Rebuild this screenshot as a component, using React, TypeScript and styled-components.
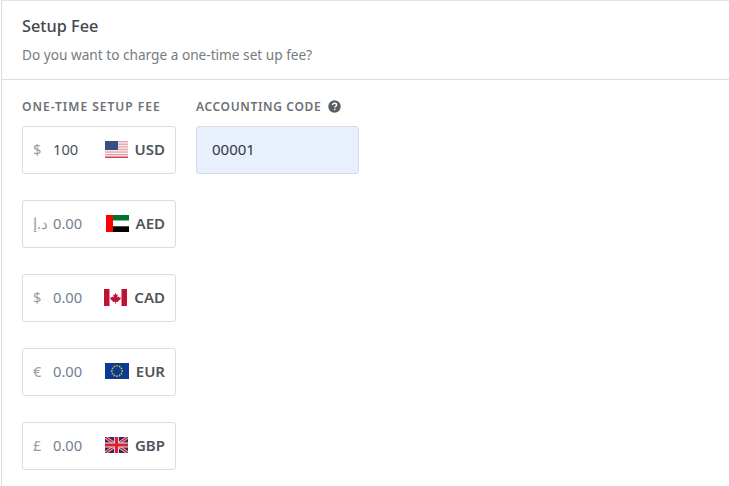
import { createGlobalStyle, styled } from "styled-components";

const GlobalStyle = createGlobalStyle`
  html, body {
    margin: 0;
    height: 100%;
    overflow: hidden;
    background: #fff;
    font-family: "Noto Sans", "Open Sans", sans-serif;
  }
`;

const Panel = styled.div`
  width: 728px;
  height: 486px;
  margin-left: 1px;
  border-left: 1px solid #dcdcdc;
  border-top: 1px solid #e4e4e4;
  box-sizing: border-box;
  overflow: hidden;
`;

const Header = styled.div`
  height: 79px;
  box-sizing: border-box;
  padding: 15px 20px 0;
  border-bottom: 1px solid #dedede;
`;

const Title = styled.div`
  font-size: 16.3px;
  line-height: 20px;
  font-weight: 500;
  color: #43484d;
`;

const Subtitle = styled.div`
  margin-top: 9px;
  font-size: 13.65px;
  line-height: 20px;
  color: #767b80;
`;

const Body = styled.div`
  display: flex;
  gap: 20px;
  padding: 18px 20px 0;
`;

const Column = styled.div<{ $width: number }>`
  width: ${(p) => p.$width}px;
  flex: none;
`;

const Label = styled.div<{ $tracking: number }>`
  display: flex;
  align-items: center;
  gap: 7px;
  height: 16px;
  margin-bottom: 12px;
  font-size: 12px;
  font-weight: 600;
  letter-spacing: ${(p) => p.$tracking}px;
  white-space: nowrap;
  color: #6c7176;
`;

const Stack = styled.div`
  display: flex;
  flex-direction: column;
  gap: 26px;
`;

const Field = styled.div`
  display: flex;
  align-items: center;
  height: 48px;
  box-sizing: border-box;
  padding: 0 10px 2px;
  background: #fff;
  border: 1px solid #dcdcdc;
  border-radius: 3px;
`;

const Symbol = styled.span`
  width: 20px;
  flex: none;
  font-size: 14.5px;
  color: #9a9da0;
`;

const Amount = styled.span<{ $filled?: boolean }>`
  flex: 1;
  font-size: 14.7px;
  color: ${(p) => (p.$filled ? "#4a4f55" : "#6f7f92")};
`;

const Flag = styled.svg`
  flex: none;
  margin-right: 7px;
`;

const Code = styled.span`
  font-size: 15px;
  font-weight: 600;
  color: #50555a;
`;

const CodeInput = styled.div`
  display: flex;
  align-items: center;
  height: 48px;
  box-sizing: border-box;
  padding: 0 0 2px 15px;
  background: #e8f0fe;
  border: 1px solid #d6dbe4;
  border-radius: 3px;
  font-size: 15px;
  color: #33383d;
`;

function UsFlag() {
  return (
    <Flag width="23" height="17" viewBox="0 0 23 17">
      <rect width="23" height="17" fill="#f7ecec" />
      {[0, 2.6, 5.2, 7.8, 10.4, 13].map((y) => (
        <rect key={y} y={y} width="23" height="1.3" fill="#e4a6ac" />
      ))}
      <rect y="15.6" width="23" height="1.3" fill="#c8303c" />
      <rect width="13" height="9" fill="#3c4d80" />
    </Flag>
  );
}

function AeFlag() {
  return (
    <Flag width="23" height="17" viewBox="0 0 23 17">
      <rect width="23" height="5.7" fill="#00732f" />
      <rect y="5.7" width="23" height="5.6" fill="#fff" />
      <rect y="11.3" width="23" height="5.7" fill="#000" />
      <rect width="7" height="17" fill="#ff0000" />
    </Flag>
  );
}

function CaFlag() {
  return (
    <Flag width="23" height="17" viewBox="0 0 23 17">
      <rect width="23" height="17" fill="#fff" />
      <rect width="5.5" height="17" fill="#bf1238" />
      <rect x="17.5" width="5.5" height="17" fill="#bf1238" />
      <path
        d="M11.5 4l1.1 2 1.2-.6-.5 3 1.5-1 .4 1 1.6-.3-.5 1.6.6.4-2.6 2-.1 1-2.3-.3v1.9h-.8v-1.9l-2.3.3-.1-1-2.6-2 .6-.4-.5-1.6 1.6.3.4-1 1.5 1-.5-3 1.2.6z"
        fill="#bf1238"
      />
    </Flag>
  );
}

function EuFlag() {
  const stars = Array.from({ length: 12 }, (_, i) => (i * Math.PI) / 6);
  return (
    <Flag width="24" height="16" viewBox="0 0 24 16">
      <rect width="24" height="16" fill="#0a3a94" />
      {stars.map((a) => (
        <circle
          key={a}
          cx={12 + 5.2 * Math.cos(a)}
          cy={8 + 5.2 * Math.sin(a)}
          r="0.9"
          fill="#d8b92c"
        />
      ))}
    </Flag>
  );
}

function GbFlag() {
  return (
    <Flag width="23" height="16" viewBox="0 0 23 16">
      <rect width="23" height="16" fill="#24306f" />
      <path d="M0 0L23 16M23 0L0 16" stroke="#f4dfe0" strokeWidth="3" />
      <path d="M0 0L23 16M23 0L0 16" stroke="#d8202f" strokeWidth="1.6" />
      <path d="M11.5 0V16M0 8H23" stroke="#f4dfe0" strokeWidth="5" />
      <path d="M11.5 0V16M0 8H23" stroke="#d8202f" strokeWidth="3.2" />
    </Flag>
  );
}

function HelpIcon() {
  return (
    <svg width="13" height="13" viewBox="0 0 13 13">
      <circle cx="6.5" cy="6.5" r="6.2" fill="#5a5f64" />
      <path
        d="M4.5 5.1c0-1.2 1-1.9 2.1-1.9 1.2 0 2 .7 2 1.7 0 1.5-1.7 1.4-1.7 2.6"
        fill="none"
        stroke="#fff"
        strokeWidth="1.4"
      />
      <rect x="5.9" y="8.6" width="1.5" height="1.5" fill="#fff" />
    </svg>
  );
}

const currencies = [
  { symbol: "$", amount: "100", code: "USD", flag: <UsFlag />, filled: true },
  { symbol: "د.إ", amount: "0.00", code: "AED", flag: <AeFlag /> },
  { symbol: "$", amount: "0.00", code: "CAD", flag: <CaFlag /> },
  { symbol: "€", amount: "0.00", code: "EUR", flag: <EuFlag /> },
  { symbol: "£", amount: "0.00", code: "GBP", flag: <GbFlag /> },
];

export default function App() {
  return (
    <Panel>
      <GlobalStyle />
      <Header>
        <Title>Setup Fee</Title>
        <Subtitle>Do you want to charge a one-time set up fee?</Subtitle>
      </Header>
      <Body>
        <Column $width={154}>
          <Label $tracking={1}>ONE-TIME SETUP FEE</Label>
          <Stack>
            {currencies.map((c) => (
              <Field key={c.code}>
                <Symbol>{c.symbol}</Symbol>
                <Amount $filled={c.filled}>{c.amount}</Amount>
                {c.flag}
                <Code>{c.code}</Code>
              </Field>
            ))}
          </Stack>
        </Column>
        <Column $width={163}>
          <Label $tracking={0.65}>
            ACCOUNTING CODE <HelpIcon />
          </Label>
          <CodeInput>00001</CodeInput>
        </Column>
      </Body>
    </Panel>
  );
}
